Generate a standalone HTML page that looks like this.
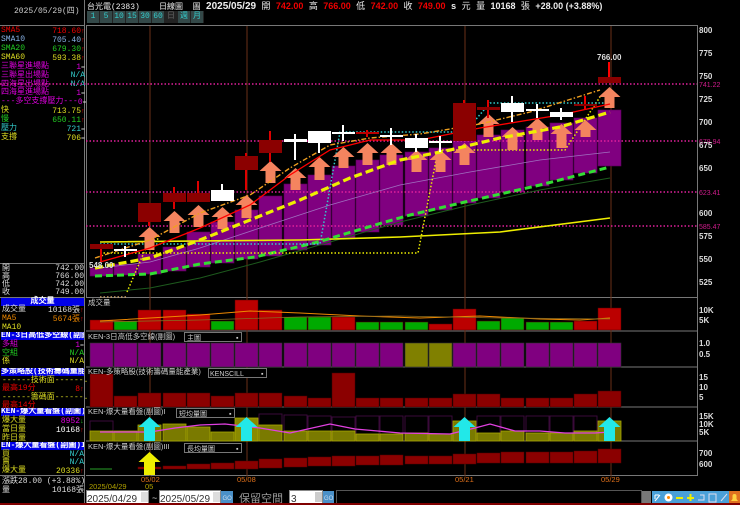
<!DOCTYPE html>
<html><head><meta charset="utf-8"><style>
*{margin:0;padding:0;box-sizing:border-box}
body{width:740px;height:505px;background:#000;overflow:hidden;position:relative;font-family:"Liberation Mono","WenQuanYi Zen Hei",monospace;font-size:8px;color:#ddd}
.a{position:absolute;white-space:nowrap;line-height:8px}
.hdr{background:#0000e6;color:#fff;font-weight:bold}
.bt{position:absolute;top:11px;height:12px;background:#334848;color:#3cc;font-size:8px;text-align:center;line-height:12px;border-right:1px solid #222}
svg text{font-family:"Liberation Sans","WenQuanYi Zen Hei",sans-serif}
</style></head><body>
<div class="a" style="left:87px;top:1px;font-size:9px;color:#eee;line-height:10px"><span style="font-size:8px">台光電(2383)&nbsp;&nbsp;&nbsp;&nbsp;日線圖&nbsp;&nbsp;圖</span> <b style="font-family:'Liberation Sans',sans-serif;font-size:10px">2025/05/29</b> 開 <b style="color:#e00;font-family:'Liberation Sans',sans-serif">742.00</b> 高 <b style="color:#e00;font-family:'Liberation Sans',sans-serif">766.00</b> 低 <b style="color:#e00;font-family:'Liberation Sans',sans-serif">742.00</b> 收 <b style="color:#e00;font-family:'Liberation Sans',sans-serif">749.00</b> <b>s</b> 元 量 <b style="font-family:'Liberation Sans',sans-serif">10168</b> 張 <b style="font-family:'Liberation Sans',sans-serif">+28.00 (+3.88%)</b></div>
<div class="bt" style="left:87px;width:13px">1</div><div class="bt" style="left:100px;width:13px">5</div><div class="bt" style="left:113px;width:13px">10</div><div class="bt" style="left:126px;width:13px">15</div><div class="bt" style="left:139px;width:13px">30</div><div class="bt" style="left:152px;width:13px">60</div><div class="bt" style="left:165px;width:13px;background:#222;color:#666">日</div><div class="bt" style="left:178px;width:13px">週</div><div class="bt" style="left:191px;width:13px">月</div>
<div class="a" style="left:0;top:0;width:85px;height:505px;border-right:1px solid #777"></div>
<div class="a" style="left:14px;top:8px;color:#ccc">2025/05/29(四)</div>
<div class="a" style="left:0;top:25px;width:85px;border-top:1px solid #777"></div>
<div class="a" style="left:1px;top:27px;width:84px;line-height:8.1px">
<div style="display:flex;justify-content:space-between;color:#e00"><span>SMA5</span><span>718.60<small>↑</small></span></div>
<div style="display:flex;justify-content:space-between;color:#8ab4e8"><span>SMA10</span><span>705.40<small style="color:#e00">↑</small></span></div>
<div style="display:flex;justify-content:space-between;color:#2c2"><span>SMA20</span><span>679.30<small style="color:#e00">↑</small></span></div>
<div style="display:flex;justify-content:space-between;color:#dd2"><span>SMA60</span><span>593.38<small style="color:#e00">↑</small></span></div>
<div style="display:flex;justify-content:space-between;color:#d0d"><span>三聯星進場點</span><span>1<small style="color:#ccc">=</small></span></div>
<div style="display:flex;justify-content:space-between;color:#d0d"><span>三聯星出場點</span><span style="color:#3cc">N/A</span></div>
<div style="display:flex;justify-content:space-between;color:#d0d"><span>四海星出場點</span><span style="color:#3cc">N/A</span></div>
<div style="display:flex;justify-content:space-between;color:#d0d"><span>四海星進場點</span><span>1<small style="color:#ccc">=</small></span></div>
<div style="display:flex;justify-content:space-between;color:#d0d"><span>---多空支撐壓力---</span><span>0<small style="color:#ccc">=</small></span></div>
<div style="display:flex;justify-content:space-between;color:#dd2"><span>快</span><span>713.75<small style="color:#e00">↑</small></span></div>
<div style="display:flex;justify-content:space-between;color:#2c2"><span>慢</span><span>650.11<small style="color:#e00">↑</small></span></div>
<div style="display:flex;justify-content:space-between;color:#3cc"><span>壓力</span><span>721<small style="color:#ccc">=</small></span></div>
<div style="display:flex;justify-content:space-between;color:#dd2"><span>支撐</span><span>706<small style="color:#ccc">=</small></span></div>
</div>
<div class="a" style="left:0;top:263px;width:85px;border-top:1px solid #777"></div>
<div class="a" style="left:2px;top:265px;width:82px;line-height:8.1px;color:#ddd">
<div style="display:flex;justify-content:space-between"><span>開</span><span>742.00</span></div>
<div style="display:flex;justify-content:space-between"><span>高</span><span>766.00</span></div>
<div style="display:flex;justify-content:space-between"><span>低</span><span>742.00</span></div>
<div style="display:flex;justify-content:space-between"><span>收</span><span>749.00</span></div></div>
<div class="a" style="left:0;top:297px;width:85px;border-top:1px solid #777"></div>
<div class="a hdr" style="left:1px;top:298px;width:83px;text-align:center">成交量</div>
<div class="a" style="left:2px;top:306px;width:82px;line-height:8.1px">
<div style="display:flex;justify-content:space-between"><span>成交量</span><span>10168張<small style="color:#e00">↑</small></span></div>
<div style="display:flex;justify-content:space-between;color:#e80"><span>MA5</span><span>5674張<small style="color:#e00">↑</small></span></div>
<div style="color:#dd2">MA10</div></div>
<div class="a hdr" style="left:1px;top:332px;width:83px;overflow:hidden">EN-3日高低多空線(副圖</div>
<div class="a" style="left:2px;top:341px;width:82px;line-height:8.1px">
<div style="display:flex;justify-content:space-between;color:#d0d"><span>多組</span><span>1<small style="color:#ccc">=</small></span></div>
<div style="display:flex;justify-content:space-between;color:#2c2"><span>空組</span><span>N/A</span></div>
<div style="display:flex;justify-content:space-between;color:#dd2"><span>係</span><span>N/A</span></div></div>
<div class="a hdr" style="left:1px;top:368px;width:83px;overflow:hidden">多策略股(技術籌碼量能產</div>
<div class="a" style="left:2px;top:377px;width:82px;line-height:8.1px">
<div style="color:#dd2">------技術面------...</div>
<div style="display:flex;justify-content:space-between;color:#e00"><span>最高19分</span><span>8<small>↑</small></span></div>
<div style="color:#dd2">------籌碼面------...</div>
<div style="color:#e00">最高14分</div></div>
<div class="a hdr" style="left:1px;top:408px;width:83px;overflow:hidden">KEN-爆大量看盤(副圖)I</div>
<div class="a" style="left:2px;top:417px;width:82px;line-height:8.1px">
<div style="display:flex;justify-content:space-between;color:#dd2"><span>爆大量</span><span style="color:#d0d">8952<small style="color:#2c2">↓</small></span></div>
<div style="display:flex;justify-content:space-between;color:#dd2"><span>當日量</span><span style="color:#fff">10168<small style="color:#e00">↑</small></span></div>
<div style="color:#dd2">昨日量</div></div>
<div class="a hdr" style="left:1px;top:442px;width:83px;overflow:hidden">EN-爆大量看盤(副圖)II</div>
<div class="a" style="left:2px;top:451px;width:82px;line-height:8.1px">
<div style="display:flex;justify-content:space-between;color:#dd2"><span>買</span><span style="color:#3cc">N/A</span></div>
<div style="display:flex;justify-content:space-between;color:#dd2"><span>賣</span><span style="color:#3cc">N/A</span></div>
<div style="display:flex;justify-content:space-between;color:#dd2"><span>爆大量</span><span>20336<small style="color:#e00">↑</small></span></div></div>
<div class="a" style="left:0;top:475px;width:85px;border-top:1px solid #777"></div>
<div class="a" style="left:2px;top:478px;width:82px;line-height:8.5px">
<div style="display:flex;justify-content:space-between"><span>漲跌</span><span>28.00 (+3.88%)</span></div>
<div style="display:flex;justify-content:space-between"><span>量</span><span>10168張</span></div></div>

<svg class="a" style="left:0;top:0" width="740" height="505" viewBox="0 0 740 505">
<g fill="none" stroke="#777" stroke-width="1">
<rect x="86.5" y="25.5" width="611" height="272"/>
<line x1="86" y1="331" x2="697" y2="331"/><line x1="86" y1="367" x2="697" y2="367"/><line x1="86" y1="407" x2="697" y2="407"/><line x1="86" y1="441" x2="697" y2="441"/><line x1="86" y1="475.5" x2="697" y2="475.5"/>
<line x1="697.5" y1="297" x2="697.5" y2="476"/>
</g>
<g stroke="#6a3018" stroke-width="1">
<line x1="150" y1="26" x2="150" y2="476"/><line x1="247" y1="26" x2="247" y2="476"/><line x1="465" y1="26" x2="465" y2="476"/><line x1="611" y1="26" x2="611" y2="476"/>
</g>
<g fill="#800080" stroke="#5a005a" stroke-width="0.6">
<rect x="90" y="268" width="23" height="8"/><rect x="114" y="264" width="23" height="11"/><rect x="138" y="254" width="23" height="20"/><rect x="163" y="247" width="23" height="24"/><rect x="187" y="232" width="23" height="35"/><rect x="211" y="222" width="23" height="41"/><rect x="235" y="210" width="23" height="49"/><rect x="259" y="196" width="23" height="60"/><rect x="284" y="184" width="23" height="66"/><rect x="308" y="175" width="23" height="70"/><rect x="332" y="166" width="23" height="72"/><rect x="356" y="160" width="23" height="72"/><rect x="380" y="155" width="23" height="70"/><rect x="405" y="152" width="23" height="64"/><rect x="429" y="148" width="23" height="62"/><rect x="453" y="140" width="23" height="63"/><rect x="477" y="135" width="23" height="63"/><rect x="501" y="130" width="23" height="62"/><rect x="526" y="127" width="23" height="59"/><rect x="550" y="123" width="23" height="57"/><rect x="574" y="118" width="23" height="55"/><rect x="598" y="110" width="23" height="56"/>
</g>
<g stroke="#e0209a" stroke-width="1.5" stroke-dasharray="1.5 2">
<line x1="0" y1="84" x2="697" y2="84"/><line x1="86" y1="141" x2="697" y2="141"/><line x1="86" y1="192" x2="697" y2="192"/><line x1="86" y1="226" x2="697" y2="226"/>
</g>
<g fill="#d01c8c" font-size="7"><text x="699" y="87">741.22</text><text x="699" y="144">678.94</text><text x="699" y="195">623.41</text><text x="699" y="229">585.47</text></g>
<polyline points="100,293 150,288 200,278 260,262 330,242 400,222 470,205 540,190 610,178" fill="none" stroke="#1d5a1d" stroke-width="1"/>
<polyline points="100,268 150,262 200,248 260,228 330,205 400,185 470,172 540,160 610,152" fill="none" stroke="#a070c0" stroke-width="0.8"/>
<polyline points="100,242 300,240 400,237 500,232 610,218" fill="none" stroke="#ee0" stroke-width="1.6"/>
<polyline points="95,276 150,274 200,264 255,257 318,242 385,222 410,215 465,202 540,185 610,167" fill="none" stroke="#3d3" stroke-width="3" stroke-dasharray="7 4"/>
<polyline points="100,253 418,253 438,150 565,150 600,97" fill="none" stroke="#ee0" stroke-width="1.5" stroke-dasharray="1.5 2"/>
<polyline points="127,292 148,243 160,238" fill="none" stroke="#ee0" stroke-width="1.5" stroke-dasharray="1.5 2"/>
<line x1="100" y1="297" x2="128" y2="297" stroke="#c9a26a" stroke-width="1.5" stroke-dasharray="1.5 2"/>
<polyline points="100,244 320,244 340,132 465,132 490,103 605,103" fill="none" stroke="#3cc" stroke-width="1.5" stroke-dasharray="1.5 2"/>
<g fill="#f4845f">
<polygon points="149.5,227 160.5,237 154.5,237 154.5,250 144.5,250 144.5,237 138.5,237"/>
<polygon points="174.5,211 185.5,221 179.5,221 179.5,233 169.5,233 169.5,221 163.5,221"/>
<polygon points="198.5,205 209.5,215 203.5,215 203.5,227 193.5,227 193.5,215 187.5,215"/>
<polygon points="222.5,207 233.5,217 227.5,217 227.5,229 217.5,229 217.5,217 211.5,217"/>
<polygon points="246.5,195 257.5,205 251.5,205 251.5,218 241.5,218 241.5,205 235.5,205"/>
<polygon points="270.5,161 281.5,171 275.5,171 275.5,183 265.5,183 265.5,171 259.5,171"/>
<polygon points="295.5,168 306.5,178 300.5,178 300.5,190 290.5,190 290.5,178 284.5,178"/>
<polygon points="319.5,157 330.5,167 324.5,167 324.5,180 314.5,180 314.5,167 308.5,167"/>
<polygon points="343.5,147 354.5,157 348.5,157 348.5,168 338.5,168 338.5,157 332.5,157"/>
<polygon points="367.5,143 378.5,153 372.5,153 372.5,165 362.5,165 362.5,153 356.5,153"/>
<polygon points="391.5,143 402.5,153 396.5,153 396.5,165 386.5,165 386.5,153 380.5,153"/>
<polygon points="416.5,150 427.5,160 421.5,160 421.5,172 411.5,172 411.5,160 405.5,160"/>
<polygon points="440.5,150 451.5,160 445.5,160 445.5,172 435.5,172 435.5,160 429.5,160"/>
<polygon points="464.5,143 475.5,153 469.5,153 469.5,165 459.5,165 459.5,153 453.5,153"/>
<polygon points="488.5,114 499.5,124 493.5,124 493.5,137 483.5,137 483.5,124 477.5,124"/>
<polygon points="512.5,127 523.5,137 517.5,137 517.5,150 507.5,150 507.5,137 501.5,137"/>
<polygon points="537.5,118 548.5,128 542.5,128 542.5,140 532.5,140 532.5,128 526.5,128"/>
<polygon points="561.5,124 572.5,134 566.5,134 566.5,148 556.5,148 556.5,134 550.5,134"/>
<polygon points="585.5,120 596.5,130 590.5,130 590.5,137 580.5,137 580.5,130 574.5,130"/>
<polygon points="609.5,87 620.5,97 614.5,97 614.5,108 604.5,108 604.5,97 598.5,97"/>
</g>
<polyline points="95,268 150,258 200,240 250,220 300,200 350,178 400,160 450,150 500,138 560,127 610,112" fill="none" stroke="#ee0" stroke-width="3.2" stroke-dasharray="8 4"/>
<polyline points="95,258 150,240 200,213 250,195 290,168 330,145 370,138 420,134 480,124 530,112 600,90" fill="none" stroke="#f0a020" stroke-width="1.4" stroke-dasharray="5 2 1.5 2"/>
<polyline points="100,262 150,248 200,228 250,205 290,175 330,150 370,140 420,140 480,128 560,115 610,104" fill="none" stroke="#f00" stroke-width="1.3"/>
<g stroke-width="2">
<line x1="101" y1="244" x2="101" y2="262" stroke="#d00"/><rect x="90" y="244" width="23" height="5" fill="#8b0000"/>
<line x1="125" y1="246" x2="125" y2="257" stroke="#fff"/><rect x="114" y="249" width="23" height="2" fill="#fff"/>
<line x1="149" y1="203" x2="149" y2="226" stroke="#d00"/><rect x="138" y="203" width="23" height="19" fill="#8b0000"/>
<line x1="174" y1="187" x2="174" y2="209" stroke="#d00"/><rect x="163" y="193" width="23" height="9" fill="#8b0000"/>
<line x1="198" y1="181" x2="198" y2="202" stroke="#d00"/><rect x="187" y="193" width="23" height="9" fill="#8b0000"/>
<line x1="222" y1="184" x2="222" y2="201" stroke="#fff"/><rect x="211" y="190" width="23" height="11" fill="#fff"/>
<line x1="246" y1="153" x2="246" y2="190" stroke="#d00"/><rect x="235" y="156" width="23" height="14" fill="#8b0000"/>
<line x1="270" y1="131" x2="270" y2="162" stroke="#d00"/><rect x="259" y="140" width="23" height="13" fill="#8b0000"/>
<line x1="295" y1="134" x2="295" y2="160" stroke="#fff"/><rect x="284" y="139" width="23" height="3" fill="#fff"/>
<line x1="319" y1="131" x2="319" y2="153" stroke="#fff"/><rect x="308" y="131" width="23" height="12" fill="#fff"/>
<line x1="343" y1="125" x2="343" y2="141" stroke="#fff"/><rect x="332" y="132" width="23" height="2" fill="#fff"/>
<line x1="367" y1="130" x2="367" y2="137" stroke="#d00"/><rect x="356" y="132" width="23" height="2" fill="#b00"/>
<line x1="391" y1="128" x2="391" y2="145" stroke="#fff"/><rect x="380" y="135" width="23" height="2" fill="#fff"/>
<line x1="416" y1="134" x2="416" y2="152" stroke="#fff"/><rect x="405" y="138" width="23" height="10" fill="#fff"/>
<line x1="440" y1="136" x2="440" y2="152" stroke="#fff"/><rect x="429" y="141" width="23" height="2" fill="#fff"/>
<line x1="464" y1="100" x2="464" y2="141" stroke="#d00"/><rect x="453" y="103" width="23" height="38" fill="#8b0000"/>
<line x1="488" y1="100" x2="488" y2="118" stroke="#d00"/><rect x="477" y="107" width="23" height="3" fill="#8b0000"/>
<line x1="512" y1="96" x2="512" y2="122" stroke="#fff"/><rect x="501" y="103" width="23" height="9" fill="#fff"/>
<line x1="537" y1="104" x2="537" y2="118" stroke="#fff"/><rect x="526" y="109" width="23" height="2" fill="#fff"/>
<line x1="561" y1="108" x2="561" y2="120" stroke="#fff"/><rect x="550" y="112" width="23" height="5" fill="#fff"/>
<line x1="585" y1="96" x2="585" y2="110" stroke="#e00"/><rect x="574" y="104" width="23" height="2" fill="#8b0000"/>
<line x1="609" y1="62" x2="609" y2="83" stroke="#f00"/><rect x="598" y="77" width="23" height="6" fill="#8b0000"/>
</g>
<g fill="#ddd" font-size="8" font-weight="bold"><text x="597" y="60">766.00</text><text x="89" y="268">548.00</text></g>
<g fill="#ddd" font-size="8" font-weight="bold"><text x="699" y="33">800</text><text x="699" y="56">775</text><text x="699" y="79">750</text><text x="699" y="102">725</text><text x="699" y="125">700</text><text x="699" y="148">675</text><text x="699" y="171">650</text><text x="699" y="216">600</text><text x="699" y="239">575</text><text x="699" y="262">550</text><text x="699" y="285">525</text>
<text x="699" y="313">10K</text><text x="699" y="323">5K</text><text x="699" y="346">1.0</text><text x="699" y="357">0.5</text><text x="699" y="380">15</text><text x="699" y="390">10</text><text x="699" y="400">5</text><text x="699" y="419">15K</text><text x="699" y="427">10K</text><text x="699" y="435">5K</text><text x="699" y="456">700</text><text x="699" y="467">600</text></g>
<g stroke="#500" stroke-width="0.5">
<rect x="90" y="320" width="23" height="10" fill="#b00"/><rect x="114" y="321" width="23" height="9" fill="#0a0"/><rect x="138" y="310" width="23" height="20" fill="#b00"/><rect x="163" y="310" width="23" height="20" fill="#b00"/><rect x="187" y="314" width="23" height="16" fill="#b00"/><rect x="211" y="321" width="23" height="9" fill="#0a0"/><rect x="235" y="300" width="23" height="30" fill="#b00"/><rect x="259" y="310" width="23" height="20" fill="#b00"/><rect x="284" y="317" width="23" height="13" fill="#0a0"/><rect x="308" y="317" width="23" height="13" fill="#0a0"/><rect x="332" y="317" width="23" height="13" fill="#b00"/><rect x="356" y="322" width="23" height="8" fill="#0a0"/><rect x="380" y="322" width="23" height="8" fill="#0a0"/><rect x="405" y="322" width="23" height="8" fill="#0a0"/><rect x="429" y="324" width="23" height="6" fill="#b00"/><rect x="453" y="309" width="23" height="21" fill="#b00"/><rect x="477" y="321" width="23" height="9" fill="#0a0"/><rect x="501" y="318" width="23" height="12" fill="#0a0"/><rect x="526" y="322" width="23" height="8" fill="#0a0"/><rect x="550" y="322" width="23" height="8" fill="#0a0"/><rect x="574" y="321" width="23" height="9" fill="#b00"/><rect x="598" y="308" width="23" height="22" fill="#b00"/>
</g>
<polyline points="100,321 150,318 200,315 250,311 300,313 360,316 420,318 480,316 540,319 580,320 610,318" fill="none" stroke="#e80" stroke-width="1"/>
<polyline points="100,322 200,320 300,317 400,316 500,318 610,319" fill="none" stroke="#886a20" stroke-width="0.8"/>
<g stroke="#333" stroke-width="0.6">
<rect x="90" y="343" width="23" height="24" fill="#800080"/><rect x="114" y="343" width="23" height="24" fill="#800080"/><rect x="138" y="343" width="23" height="24" fill="#800080"/><rect x="163" y="343" width="23" height="24" fill="#800080"/><rect x="187" y="343" width="23" height="24" fill="#800080"/><rect x="211" y="343" width="23" height="24" fill="#800080"/><rect x="235" y="343" width="23" height="24" fill="#800080"/><rect x="259" y="343" width="23" height="24" fill="#800080"/><rect x="284" y="343" width="23" height="24" fill="#800080"/><rect x="308" y="343" width="23" height="24" fill="#800080"/><rect x="332" y="343" width="23" height="24" fill="#800080"/><rect x="356" y="343" width="23" height="24" fill="#800080"/><rect x="380" y="343" width="23" height="24" fill="#800080"/><rect x="405" y="343" width="23" height="24" fill="#808000"/><rect x="429" y="343" width="23" height="24" fill="#808000"/><rect x="453" y="343" width="23" height="24" fill="#800080"/><rect x="477" y="343" width="23" height="24" fill="#800080"/><rect x="501" y="343" width="23" height="24" fill="#800080"/><rect x="526" y="343" width="23" height="24" fill="#800080"/><rect x="550" y="343" width="23" height="24" fill="#800080"/><rect x="574" y="343" width="23" height="24" fill="#800080"/><rect x="598" y="343" width="23" height="24" fill="#800080"/>
</g>
<g fill="#8b0000" stroke="#400" stroke-width="0.5">
<rect x="90" y="374" width="23" height="33"/><rect x="114" y="396" width="23" height="11"/><rect x="138" y="393" width="23" height="14"/><rect x="163" y="393" width="23" height="14"/><rect x="187" y="393" width="23" height="14"/><rect x="211" y="396" width="23" height="11"/><rect x="235" y="393" width="23" height="14"/><rect x="259" y="393" width="23" height="14"/><rect x="284" y="396" width="23" height="11"/><rect x="308" y="398" width="23" height="9"/><rect x="332" y="373" width="23" height="34"/><rect x="356" y="398" width="23" height="9"/><rect x="380" y="398" width="23" height="9"/><rect x="405" y="398" width="23" height="9"/><rect x="429" y="398" width="23" height="9"/><rect x="453" y="394" width="23" height="13"/><rect x="477" y="394" width="23" height="13"/><rect x="501" y="398" width="23" height="9"/><rect x="526" y="398" width="23" height="9"/><rect x="550" y="398" width="23" height="9"/><rect x="574" y="394" width="23" height="13"/><rect x="598" y="391" width="23" height="16"/>
</g>
<g fill="none" stroke="#3a0a3a" stroke-width="1">
<rect x="90" y="421" width="23" height="20"/><rect x="259" y="414" width="23" height="27"/><rect x="284" y="415" width="23" height="26"/><rect x="308" y="416" width="23" height="25"/><rect x="332" y="417" width="23" height="24"/><rect x="356" y="416" width="23" height="25"/><rect x="380" y="416" width="23" height="25"/><rect x="405" y="416" width="23" height="25"/><rect x="429" y="416" width="23" height="25"/><rect x="477" y="416" width="23" height="25"/><rect x="501" y="416" width="23" height="25"/><rect x="526" y="416" width="23" height="25"/><rect x="550" y="416" width="23" height="25"/><rect x="574" y="416" width="23" height="25"/>
</g>
<g fill="#7a7a00" stroke="#a8a800" stroke-width="0.8">
<rect x="90" y="431" width="23" height="10"/><rect x="114" y="431" width="23" height="10"/><rect x="138" y="425" width="23" height="16"/><rect x="163" y="424" width="23" height="17"/><rect x="187" y="427" width="23" height="14"/><rect x="211" y="432" width="23" height="9"/><rect x="235" y="418" width="23" height="23" fill="#8a8a00"/><rect x="259" y="425" width="23" height="16"/><rect x="284" y="431" width="23" height="10"/><rect x="308" y="431" width="23" height="10"/><rect x="332" y="431" width="23" height="10"/><rect x="356" y="434" width="23" height="7"/><rect x="380" y="434" width="23" height="7"/><rect x="405" y="433" width="23" height="8"/><rect x="429" y="434" width="23" height="7"/><rect x="453" y="421" width="23" height="20"/><rect x="477" y="433" width="23" height="8"/><rect x="501" y="431" width="23" height="10"/><rect x="526" y="433" width="23" height="8"/><rect x="550" y="433" width="23" height="8"/><rect x="574" y="431" width="23" height="10"/><rect x="598" y="421" width="23" height="20"/>
</g>
<polyline points="100,432 150,432 175,428 200,425 225,424 260,428 290,433 330,424 355,429 400,433 450,434 475,428 490,424 515,431 540,431 565,433 595,433 610,432" fill="none" stroke="#e040e0" stroke-width="1.3"/>
<g fill="#22e8e8">
<polygon points="149.5,417 160.5,427 155,427 155,441 144,441 144,427 138.5,427"/>
<polygon points="246.5,417 257.5,427 252,427 252,441 241,441 241,427 235.5,427"/>
<polygon points="464.5,417 475.5,427 470,427 470,441 459,441 459,427 453.5,427"/>
<polygon points="609.5,417 620.5,427 615,427 615,441 604,441 604,427 598.5,427"/>
</g>
<line x1="90" y1="469" x2="112" y2="469" stroke="#1a6a1a" stroke-width="1.5"/>
<g fill="#8b0000" stroke="#500" stroke-width="0.5">
<rect x="138" y="467" width="23" height="2"/><rect x="163" y="466" width="23" height="3"/><rect x="187" y="464" width="23" height="5"/><rect x="211" y="463" width="23" height="6"/><rect x="235" y="461" width="23" height="8"/><rect x="259" y="459" width="23" height="9"/><rect x="284" y="458" width="23" height="9"/><rect x="308" y="457" width="23" height="9"/><rect x="332" y="456" width="23" height="10"/><rect x="356" y="456" width="23" height="9"/><rect x="380" y="455" width="23" height="10"/><rect x="405" y="456" width="23" height="8"/><rect x="429" y="456" width="23" height="8"/><rect x="453" y="454" width="23" height="10"/><rect x="477" y="453" width="23" height="10"/><rect x="501" y="452" width="23" height="11"/><rect x="526" y="452" width="23" height="11"/><rect x="550" y="452" width="23" height="11"/><rect x="574" y="451" width="23" height="12"/><rect x="598" y="449" width="23" height="14"/>
</g>
<polygon points="149.5,452 160.5,462 155,462 155,475 144,475 144,462 138.5,462" fill="#ee0"/>
<g fill="#ccc" font-size="7.5">
<text x="88" y="305">成交量</text>
<text x="88" y="339">KEN-3日高低多空線(副圖)</text>
<text x="88" y="374">KEN-多策略股(技術籌碼量能產業)</text>
<text x="88" y="414">KEN-爆大量看盤(副圖)I</text>
<text x="88" y="449">KEN-爆大量看盤(副圖)III</text>
</g>
<g fill="#000" stroke="#777" stroke-width="1">
<rect x="184.5" y="332.5" width="57" height="9"/><rect x="208.5" y="368.5" width="58" height="9"/><rect x="176.5" y="408.5" width="58" height="9"/><rect x="184.5" y="443.5" width="57" height="9"/>
</g>
<g fill="#ccc" font-size="7"><text x="187" y="340">主圖</text><text x="210" y="376">KENSCILL</text><text x="179" y="416">短均量圖</text><text x="187" y="451">長均量圖</text>
<text x="236" y="340">▪</text><text x="261" y="376">▪</text><text x="229" y="416">▪</text><text x="236" y="451">▪</text></g>
<g font-size="7.5"><text x="89" y="489" fill="#b0a000">2025/04/29</text><text x="141" y="482" fill="#e0701a">05/02</text><text x="145" y="489" fill="#b0a000">05</text><text x="237" y="482" fill="#e0701a">05/08</text><text x="455" y="482" fill="#e0701a">05/21</text><text x="601" y="482" fill="#e0701a">05/29</text></g>
<!-- bottom controls -->
<rect x="86.5" y="490.5" width="62" height="13" fill="#fff" stroke="#888"/>
<rect x="141" y="492" width="7" height="10" fill="#ddd"/>
<text x="87" y="502" font-size="10" fill="#333" font-family="Liberation Serif">2025/04/29</text>
<text x="152" y="501" font-size="9" fill="#ccc">~</text>
<rect x="159.5" y="490.5" width="61" height="13" fill="#fff" stroke="#888"/>
<rect x="213" y="492" width="7" height="10" fill="#ddd"/>
<text x="160" y="502" font-size="10" fill="#333" font-family="Liberation Serif">2025/05/29</text>
<rect x="221" y="491" width="12" height="12" fill="#4a90c8"/><text x="222.5" y="500" font-size="6" fill="#cde">GO</text>
<text x="239" y="502" font-size="11" fill="#999">保留空間</text>
<rect x="289.5" y="490.5" width="33" height="13" fill="#fff" stroke="#888"/>
<text x="291" y="502" font-size="10" fill="#333" font-family="Liberation Serif">3</text>
<rect x="315" y="492" width="7" height="10" fill="#ccc"/>
<rect x="323" y="491" width="11" height="12" fill="#4a90c8"/><text x="324" y="500" font-size="6" fill="#cde">GO</text>
<rect x="336.5" y="490.5" width="305" height="13" fill="#000" stroke="#555"/>
<rect x="642" y="491" width="9" height="13" fill="#777"/>
<g fill="#4aa0d8"><rect x="652" y="491" width="11" height="13"/><rect x="663" y="491" width="11" height="13"/><rect x="674" y="491" width="11" height="13"/><rect x="685" y="491" width="11" height="13"/><rect x="696" y="491" width="11" height="13"/><rect x="707" y="491" width="11" height="13"/><rect x="718" y="491" width="11" height="13"/></g>
<circle cx="668.5" cy="497.5" r="4" fill="#fff"/><circle cx="668.5" cy="497.5" r="1.5" fill="#f80"/>
<rect x="676" y="497" width="7" height="2" fill="#ee0"/>
<rect x="687" y="497" width="7" height="2" fill="#ee0"/><rect x="689.5" y="494" width="2" height="7" fill="#ee0"/>
<path d="M655 501 L660 495 M655 495 L655 499 M655 495 L659 495" stroke="#fff" stroke-width="1" fill="none"/>
<path d="M698 500 h6 v-5 h-4 M709 494 h7 v8 h-7z M721 501 l6 -7" stroke="#dde" stroke-width="1" fill="none"/>
<rect x="729" y="491" width="11" height="13" fill="#e07020"/>
<path d="M731 501 h7 l-1.5 -2 v-3 a2 2 0 0 0 -4 0 v3z" fill="#ffd040"/>
<rect x="0" y="503" width="740" height="2" fill="#800000"/>
</svg>
</body></html>
